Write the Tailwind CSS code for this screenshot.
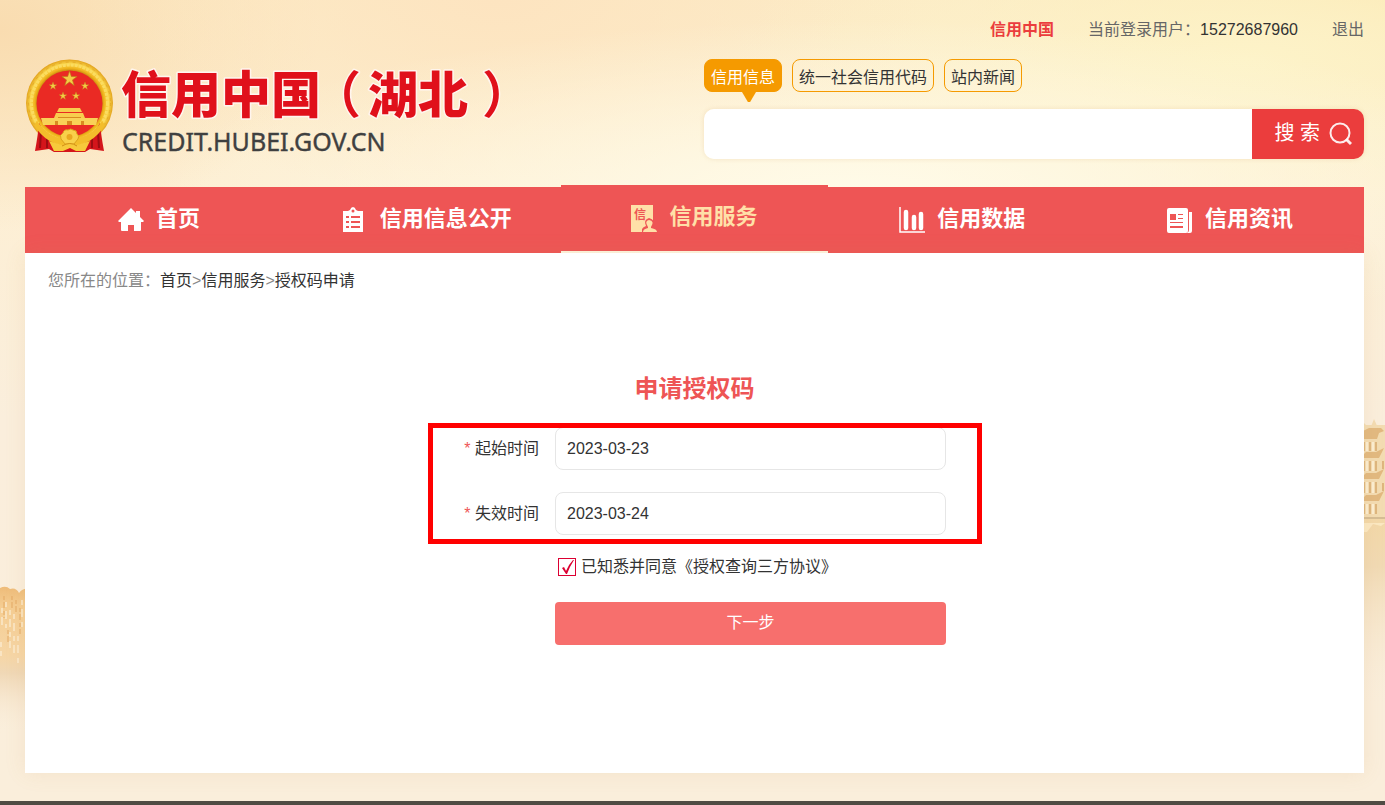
<!DOCTYPE html>
<html lang="zh-CN">
<head>
    <meta charset="UTF-8">
    <meta name="viewport" content="width=device-width, initial-scale=1.0">
    <script src="https://cdn.jsdelivr.net/npm/@tailwindcss/browser@4"></script>
    <title>信用中国（湖北）</title>
</head>
<body class="relative flex min-h-screen flex-col overflow-x-hidden bg-[#faeedb] font-['Liberation_Sans','Noto_Sans_CJK_SC',sans-serif] text-base text-[#333]">
    <!-- 页面背景 -->
    <div class="absolute inset-0 -z-10 overflow-hidden bg-[radial-gradient(ellipse_700px_170px_at_62%_190px,#fffbe8_0%,#fffbe800_100%),radial-gradient(ellipse_520px_170px_at_90%_60px,#fdf3c8_0%,#fdf3c800_100%),radial-gradient(ellipse_420px_120px_at_100%_0px,#fbe6b0_0%,#fbe6b000_100%),radial-gradient(ellipse_420px_200px_at_36%_0px,#fde4c0_0%,#fde4c000_100%),radial-gradient(ellipse_320px_200px_at_0%_30px,#f9dcb0_0%,#f9dcb000_100%),linear-gradient(180deg,#fcebc6_0px,#fdefd4_190px,#faeedc_420px,#faeedb_100%)]">
        <svg class="absolute left-0 top-[580px]" width="60" height="180" viewBox="0 0 60 180">
            <defs>
                <linearGradient id="hill" x1="0" y1="0" x2="0" y2="1">
                    <stop offset="0" stop-color="#eebb78"/>
                    <stop offset=".12" stop-color="#f5cd92"/>
                    <stop offset=".4" stop-color="#f6d6a6"/>
                    <stop offset=".5" stop-color="#f0d8b6"/>
                    <stop offset=".85" stop-color="#faeedb" stop-opacity="0"/>
                </linearGradient>
            </defs>
            <path d="M0 8q6-3 10 1 6-2 9 4 4-5 9-4l32-3v174H0z" fill="url(#hill)"/>
            <path d="M2 28v22M6 22v26M10 30v38M14 34v44M18 56v30M22 20v28M1 62v14" stroke="#fdf0d8" stroke-width="2" stroke-dasharray="5 4 8 5" opacity=".6"/>
            <path d="M4 16v22M12 16v14M20 28v26M8 50v14M16 20v12" stroke="#e5ab66" stroke-width="2" stroke-dasharray="4 2 6 3" opacity=".5"/>
        </svg>
        <svg class="absolute right-0 top-[415px]" width="24" height="300" viewBox="0 0 24 300">
            <defs>
                <linearGradient id="base" x1="0" y1="0" x2="0" y2="1">
                    <stop offset="0" stop-color="#f3d8a8"/>
                    <stop offset=".25" stop-color="#f1dab4"/>
                    <stop offset="1" stop-color="#faeedb" stop-opacity="0"/>
                </linearGradient>
            </defs>
            <path d="M0 104h24v190H0z" fill="url(#base)"/>
            <path d="M0 5l9 9 4-10 4 9 7-3v94H0z" fill="#f3dcb2"/>
            <path d="M0 10h24v8H0z" fill="#f3dcb2"/>
            <g fill="#e2b980">
                <path d="M0 17l8-4 12 0 3 3-5 2-2 6H0z"/>
                <path d="M0 42l5-5h10l8-4-5 10H0z"/>
                <path d="M0 63l5-5h10l8-4-5 10H0z"/>
                <path d="M0 85l5-5h10l8-4-5 10H0z"/>
                <path d="M0 102h24v2H0z" fill="#d6bd94"/>
            </g>
            <path d="M3 27v9M9 27v9M15 27v9M3 46v10M9 46v10M15 46v10M3 67v11M9 67v11M15 67v11M3 89v10M9 89v10M15 89v10M22 46v8M22 68v8" stroke="#d9ad72" stroke-width="2" opacity=".8"/>
            <path d="M6 27v9M12 27v9M6 46v10M12 46v10M6 67v11M12 67v11M6 89v10M12 89v10" stroke="#fbeed2" stroke-width="2"/>
            <path d="M0 108h24l-4 3-8-2-6 8H0z" fill="#fbe8c2"/>
        </svg>
    </div>

    <!-- 头部 -->
    <header class="flex h-[187px] justify-between pl-[25px] pr-[21px]">
        <a href="#" class="pt-[55px]">
            <svg width="490" height="105" viewBox="0 0 490 105" role="img" aria-label="信用中国（湖北）">
                <defs>
                    <path id="star" d="M0-10L2.3-3.1H9.5L3.7 1.2 5.9 8.1 0 3.8-5.9 8.1-3.7 1.2-9.5-3.1H-2.3z"/>
                    <radialGradient id="gold" cx=".5" cy=".5" r=".5">
                        <stop offset=".74" stop-color="#c98a10"/>
                        <stop offset=".8" stop-color="#f0b41c"/>
                        <stop offset=".9" stop-color="#fbd84e"/>
                        <stop offset="1" stop-color="#e2a21b"/>
                    </radialGradient>
                </defs>
                <!-- 国徽 -->
                <circle cx="44.5" cy="48" r="43.5" fill="url(#gold)"/>
                <circle cx="44.5" cy="48" r="38" fill="none" stroke="#fbdc60" stroke-width="3" stroke-dasharray="3 1"/>
                <circle cx="44.5" cy="48" r="41" fill="none" stroke="#e5ab28" stroke-width="1" stroke-dasharray="3 4"/>
                <path d="M14 68q-1 12-4 28l14-2 5 3h31l5-3 14 2q-3-16-4-28-8 14-16 18H30Q20 80 14 68z" fill="#d4151b"/>
                <path d="M16 76l-1 17M22 82v11M67 82v11M73 76l1 17" stroke="#9d0d12" stroke-width="2"/>
                <circle cx="44.5" cy="48.5" r="33" fill="#ea2a24"/>
                <g fill="#f4cb45" stroke="#b97a16" stroke-width=".8">
                    <use href="#star" transform="translate(44.5 24) scale(.8)"/>
                    <use href="#star" transform="translate(28 31) scale(.42)"/>
                    <use href="#star" transform="translate(60 31) scale(.42)"/>
                    <use href="#star" transform="translate(38 41) scale(.42)"/>
                    <use href="#star" transform="translate(51 41) scale(.42)"/>
                </g>
                <path d="M34 53h21l2 4H32zM31 58h27l2 5H29z" fill="#f8cd4e"/>
                <path d="M16 63h57l-2 7H18z" fill="#f9d257"/>
                <path d="M33 62h23v1H33zM42 66h5v4h-5zM30 66h3v4h-3zM56 66h3v4h-3z" fill="#d98a20"/>
                <path d="M12 66q12 17 26 17h13q15-1 26-17l3 4Q67 91 44.5 91 22 91 9 70z" fill="#f3bd2b"/>
                <path d="M36 84q-2-4 2-6 1-4 5-3 3-2 5 0 4 0 4 4 3 2 1 5l-4 5h-9z" fill="#f9d04a" stroke="#dba01c"/>
                <path d="M24 86l13 4q7-4 15 0l13-4-5 10H51l-6-3-7 3h-9z" fill="#f7c93b"/>
                <circle cx="44.5" cy="82" r="3" fill="#e9a820"/>
                <path d="M37 91q8-5 15 0" fill="none" stroke="#d08c14"/>
                <!-- 站名 -->
                <g class="[font-feature-settings:'halt']" font-family="'Noto Sans CJK SC', sans-serif" font-size="50" font-weight="900" fill="#e0101b" stroke="#fff5ee" stroke-width="3" stroke-linejoin="round" paint-order="stroke">
                    <text x="96" y="58">信用中国</text>
                    <text x="311" y="58" font-weight="700">（</text>
                    <text x="343" y="58">湖北</text>
                    <text x="457" y="58" font-weight="700">）</text>
                </g>
                <text x="97" y="96" font-family="'Noto Sans', sans-serif" font-size="25" fill="#3f4040" stroke="#3f4040" stroke-width=".4">CREDIT.HUBEI.GOV.CN</text>
            </svg>
        </a>
        <div class="flex w-[660px] flex-col">
            <div class="flex h-[59px] items-center justify-end gap-[34px] text-[#666]">
                <a href="#" class="font-bold text-[#eb3d3d]">信用中国</a>
                <span>当前登录用户：<a href="#" class="text-[#333]">15272687960</a></span>
                <a href="#">退出</a>
            </div>
            <div class="flex gap-2.5">
                <button type="button" class="relative h-[33px] rounded-lg border border-[#f59a00] bg-[#f59a00] px-1.5 pt-1 leading-6 text-white">信用信息
                    <span class="absolute left-[37px] top-8 h-2.5 w-3.5 bg-[#f59a00] [clip-path:polygon(0_0,100%_0,58%_100%,42%_100%)]"></span>
                </button>
                <button type="button" class="h-[33px] rounded-lg border border-[#f59a00] px-1.5 pt-1 leading-6">统一社会信用代码</button>
                <button type="button" class="h-[33px] rounded-lg border border-[#f59a00] px-1.5 pt-1 leading-6">站内新闻</button>
            </div>
            <form class="mt-[17px] flex h-[50px] overflow-hidden rounded-[10px] shadow-[0_0_5px_rgba(200,150,80,0.2)]">
                <input type="text" aria-label="搜索" class="min-w-0 flex-1 bg-white px-4 outline-none">
                <button type="button" class="flex w-28 items-center justify-end gap-2 bg-[#eb3d3d] pr-3 text-xl text-white">
                    <span class="pb-0.5">搜 索</span>
                    <svg width="24" height="24" viewBox="0 0 24 24" fill="none" stroke="#fff" stroke-opacity=".9">
                        <circle cx="12" cy="11" r="9.5" stroke-width="2"/>
                        <path d="M18 17l5 5" stroke-width="3"/>
                    </svg>
                </button>
            </form>
        </div>
    </header>

    <!-- 导航 -->
    <div class="pl-[25px] pr-[21px]">
        <nav class="grid h-[66px] grid-cols-5 text-[22px] font-bold text-white">
            <a href="#" class="flex items-center justify-center gap-3 bg-[#ee5555]">
                <svg width="26" height="26" viewBox="0 0 26 26" fill="#fff">
                    <path d="M13 1l5 5V4h4v6l4 4-1 1h-2v8q0 1-1 1h-6v-6h-6v6H4q-1 0-1-1v-8H1l-1-1z"/>
                </svg>
                <span class="pb-1">首页</span>
            </a>
            <a href="#" class="flex items-center justify-center gap-3 bg-[#ee5555]">
                <svg width="26" height="26" viewBox="0 0 26 26">
                    <path d="M1 4h5l2-1q1-3 3-3t3 3l2 1h5v21H1z" fill="#fff"/>
                    <circle cx="11" cy="4" r="1.5" fill="#ee5555"/>
                    <path d="M4 10h3M9 10h9M4 15h3M9 15h9M4 20h3M9 20h9" stroke="#ee5555" stroke-width="2"/>
                </svg>
                <span class="pb-1">信用信息公开</span>
            </a>
            <a href="#" class="-mt-0.5 mb-0.5 flex items-center justify-center gap-3 bg-[#ee5555] text-[#ffe0a8]">
                <svg width="26" height="28" viewBox="0 0 26 28">
                    <path d="M0 1h22v27H0z" fill="#ffe0a8"/>
                    <text x="3" y="15" font-family="'Noto Sans CJK SC', sans-serif" font-size="12" font-weight="700" fill="#ee5555">信</text>
                    <path d="M11 28v-3q1-2 4-3-3-6 3-8 7 2 4 8 3 1 4 3v3z" fill="#ee5555"/>
                    <path d="M12 28q0-3 5-4v-1q-4-6 1-7 6 1 2 7v1q6 1 6 4z" fill="#ffe0a8"/>
                </svg>
                <span class="pb-1">信用服务</span>
            </a>
            <a href="#" class="flex items-center justify-center gap-3 bg-[#ee5555]">
                <svg width="26" height="26" viewBox="0 0 26 26" fill="none" stroke="#fff">
                    <path d="M1 0v25h25" stroke-width="1.500"/>
                    <path d="M7 5v16M15 10v11M22 7v14" stroke-width="4.500" stroke-linecap="round"/>
                </svg>
                <span class="pb-1">信用数据</span>
            </a>
            <a href="#" class="flex items-center justify-center gap-3 bg-[#ee5555]">
                <svg width="26" height="26" viewBox="0 0 26 26">
                    <path d="M2 1h17q2 0 2 2v21q0 2-2 2H2q-2 0-2-2V3q0-2 2-2zM22 5h3v19q0 2-2 2h-3q2-1 2-3z" fill="#fff"/>
                    <path d="M3 7h6v6H3zM11 7h5v1h-5zM11 11h5v1h-5zM3 15h13v1H3zM3 19h13v2H3z" fill="#ee5555"/>
                </svg>
                <span class="pb-1">信用资讯</span>
            </a>
        </nav>
    </div>

    <!-- 主体内容 -->
    <main class="mb-7 ml-[25px] mr-[21px] min-h-[520px] flex-1 bg-white shadow-[0_0_20px_rgba(200,150,80,0.12)]">
        <div class="px-[23px] pt-4 leading-6 text-[#888]">
            您所在的位置：<a href="#" class="text-[#333]">首页</a>&gt;<a href="#" class="text-[#333]">信用服务</a>&gt;<a href="#" class="text-[#333]">授权码申请</a>
        </div>
        <form class="mx-auto mt-20 w-[503px]">
            <h1 class="text-center text-2xl font-bold text-[#ee5555]">申请授权码</h1>
            <div class="relative mt-[22px] flex flex-col gap-[22px]">
                <div class="flex items-center gap-4">
                    <label for="start-date" class="w-24 text-right"><span class="text-[#ee5555]">*</span> 起始时间</label>
                    <input type="text" id="start-date" value="2023-03-23" class="h-[43px] min-w-0 flex-1 rounded-lg border border-[#e6e6e6] px-[11px] outline-none">
                </div>
                <div class="flex items-center gap-4">
                    <label for="end-date" class="w-24 text-right"><span class="text-[#ee5555]">*</span> 失效时间</label>
                    <input type="text" id="end-date" value="2023-03-24" class="h-[43px] min-w-0 flex-1 rounded-lg border border-[#e6e6e6] px-[11px] outline-none">
                </div>
                <!-- 红色标注框 -->
                <div class="pointer-events-none absolute -bottom-[9px] -left-[15px] -right-9 -top-1 border-[5px] border-[#ff0000]"></div>
            </div>
            <div class="ml-[115px] mt-5 flex h-6 items-center gap-[5px]">
                <span class="relative h-[18px] w-[18px]">
                    <input type="checkbox" id="agree" checked class="block h-[18px] w-[18px] appearance-none border border-[#dc0032] bg-white">
                    <svg class="pointer-events-none absolute inset-0" width="18" height="18" viewBox="0 0 18 18">
                        <path d="M4 10l2-1 2 4q3-7 7-11l1 0q-4 6-7 14H8z" fill="#dc0032"/>
                    </svg>
                </span>
                <label for="agree">已知悉并同意《授权查询三方协议》</label>
            </div>
            <div class="mt-[23px] pl-28">
                <button type="button" class="h-[43px] w-full rounded-sm bg-[#f76f6d] pb-0.5 text-white">下一步</button>
            </div>
        </form>
    </main>

    <footer class="h-1 bg-[#504c44]"></footer>
</body>
</html>
